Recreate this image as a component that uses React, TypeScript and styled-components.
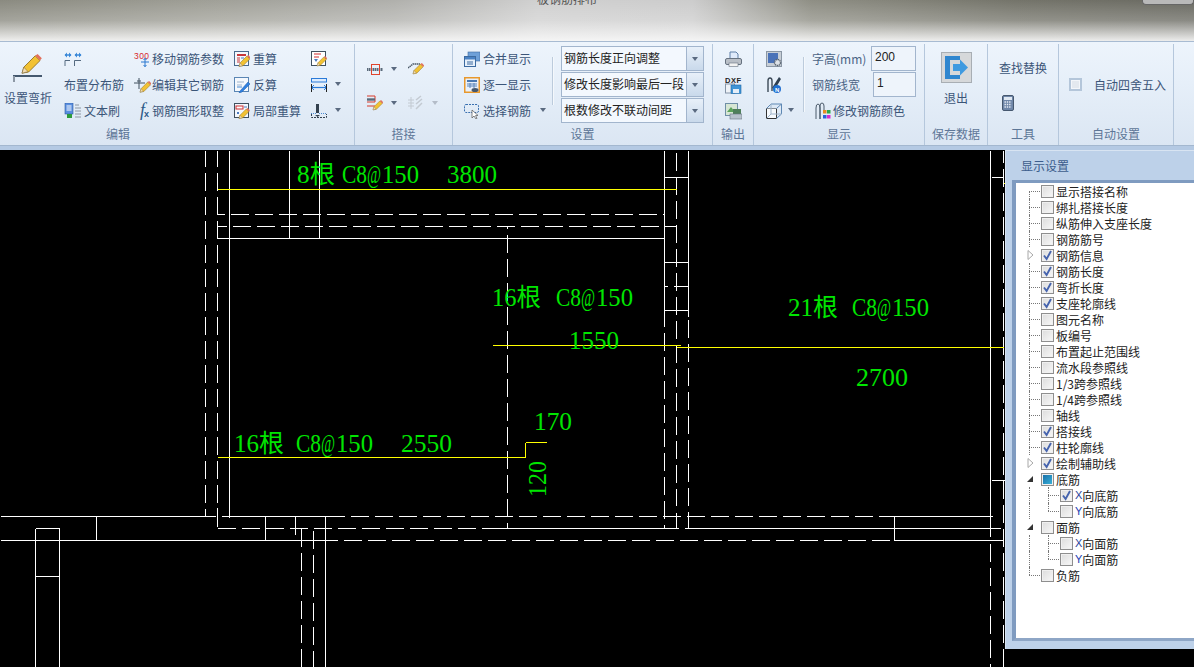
import React from "react";
import styled, { createGlobalStyle, css } from "styled-components";

const Global = createGlobalStyle`
  html, body { margin: 0; padding: 0; background: #000; overflow: hidden; }
  #root { width: 1194px; height: 667px; }
`;

const Page = styled.div`
  width: 1194px;
  height: 667px;
  display: flex;
  flex-direction: column;
  overflow: hidden;
  font-family: "Noto Sans CJK SC", "Liberation Sans", sans-serif;
  font-size: 12px;
`;

const TitleBar = styled.div`
  height: 41px;
  flex: none;
  display: flex;
  justify-content: space-between;
  align-items: flex-start;
  overflow: hidden;
  padding-left: 537px;
  box-sizing: border-box;
  background:
    linear-gradient(180deg, rgba(255,255,255,0) 0%, rgba(255,255,255,0.22) 50%, rgba(248,248,248,0.92) 100%),
    linear-gradient(90deg, #8a8a80 0%, #a2a29a 20%, #b0b0ac 33%, #d0d0d0 45%, #cccccc 58%, #8e8e84 68%, #74746a 85%, #6a6a62 100%);
`;

const TitleText = styled.span`
  color: #555;
  line-height: 12px;
  margin-top: -7px;
`;

const WindowButtons = styled.div`
  width: 50px;
  height: 4px;
  border: 1px solid #666;
  border-top: none;
  border-radius: 0 0 4px 4px;
  background: #b9b9b9;
`;

const Ribbon = styled.div`
  height: 105px;
  flex: none;
  display: flex;
  box-sizing: border-box;
  border-top: 1px solid #a8bbd2;
  border-bottom: 1px solid #a3b7cf;
  color: #3b5578;
  background: linear-gradient(180deg, #edf4fc 0%, #e6eff9 40%, #dbe6f3 100%);
`;

const Group = styled.div<{ $w?: number }>`
  flex: ${(p) => (p.$w ? `0 0 ${p.$w}px` : "1 1 0")};
  box-sizing: border-box;
  display: flex;
  flex-direction: column;
  margin-top: 2px;
  border-right: 1px solid #b5c7dc;
  &:last-child { border-right: none; }
`;

const GroupBody = styled.div<{ $pl?: number; $center?: boolean }>`
  height: 78px;
  margin-top: 1px;
  padding-left: ${(p) => p.$pl ?? 0}px;
  display: flex;
  align-items: flex-start;
  justify-content: ${(p) => (p.$center ? "center" : "flex-start")};
`;

const GroupLabel = styled.div<{ $w?: number }>`
  height: 21px;
  line-height: 21px;
  text-align: center;
  color: #5d7697;
  ${(p) => p.$w && css`width: ${p.$w}px;`}
`;

const LargeButton = styled.div<{ $mr?: number; $pt: number; $gap: number }>`
  width: 48px;
  height: 78px;
  margin-right: ${(p) => p.$mr ?? 0}px;
  display: flex;
  flex-direction: column;
  align-items: center;
  padding-top: ${(p) => p.$pt}px;
  box-sizing: border-box;
  gap: ${(p) => p.$gap}px;
  white-space: nowrap;
`;

const Column = styled.div<{ $w?: number }>`
  ${(p) => p.$w && css`width: ${p.$w}px;`}
  flex: none;
  display: flex;
  flex-direction: column;
`;

const Row = styled.div<{ $gap?: number; $pl?: number }>`
  height: 26px;
  display: flex;
  align-items: center;
  gap: ${(p) => p.$gap ?? 2}px;
  padding-left: ${(p) => p.$pl ?? 0}px;
  white-space: nowrap;
  & > svg { margin-top: 2px; }
`;

const Caret = styled.span<{ $ml?: number; $off?: boolean }>`
  width: 0;
  height: 0;
  flex: none;
  margin-left: ${(p) => p.$ml ?? 0}px;
  border-left: 3.5px solid transparent;
  border-right: 3.5px solid transparent;
  border-top: 4px solid ${(p) => (p.$off ? "#b4bcc8" : "#5a6a80")};
`;

const VSep = styled.div<{ $mt: number; $h: number; $mr: number }>`
  width: 1px;
  flex: none;
  height: ${(p) => p.$h}px;
  margin-top: ${(p) => p.$mt}px;
  margin-right: ${(p) => p.$mr}px;
  background: #bccbdc;
  box-shadow: 1px 0 0 #f4f8fc;
`;

const LapGrid = styled.div`
  display: grid;
  grid-template-columns: 41px 30px;
  grid-auto-rows: 34px;
  margin-top: 7px;
  align-items: center;
`;

const LapCell = styled.div`
  display: flex;
  align-items: center;
  gap: 8px;
`;

const Combos = styled.div`
  width: 143px;
  margin-top: 1px;
  display: flex;
  flex-direction: column;
  gap: 1px;
`;

const Combo = styled.div`
  height: 25px;
  box-sizing: border-box;
  display: flex;
  border: 1px solid #a2b5cd;
  background: #f3f8fe;
  color: #222;
`;

const ComboText = styled.span`
  flex: 1;
  padding-left: 2px;
  line-height: 22px;
  white-space: nowrap;
  overflow: hidden;
`;

const ComboButton = styled.span`
  width: 16px;
  flex: none;
  display: flex;
  align-items: center;
  justify-content: center;
  border-left: 1px solid #a2b5cd;
  background: linear-gradient(180deg, #e8f0f9, #c9d9eb);
`;

const FieldRow = styled.div<{ $label: number }>`
  display: flex;
  height: 26px;
  align-items: center;
  white-space: nowrap;
  & > span { width: ${(p) => p.$label}px; flex: none; color: #4b6485; }
`;

const NumberInput = styled.div<{ $w: number }>`
  width: ${(p) => p.$w}px;
  height: 25px;
  align-self: flex-end;
  box-sizing: border-box;
  border: 1px solid #a2b5cd;
  background: #eef4fb;
  color: #222;
  font-family: "Liberation Sans", sans-serif;
  padding-left: 3px;
  line-height: 21px;
`;

const ToolsColumn = styled.div`
  display: flex;
  flex-direction: column;
  white-space: nowrap;
  padding-top: 14px;
  gap: 19px;
  align-items: flex-start;
`;

const CalcWrap = styled.div`
  padding-left: 3px;
`;

const AutoRow = styled.div`
  height: 78px;
  display: flex;
  align-items: center;
  gap: 12px;
  white-space: nowrap;
`;

const AutoBox = styled.span`
  width: 13px;
  height: 13px;
  margin-top: 1px;
  box-sizing: border-box;
  border: 2px solid #b4c6da;
  background: #e4e9ef;
  box-shadow: inset 0 0 0 1px #f3f6fa;
`;

const Stripe = styled.div`
  height: 4px;
  flex: none;
  background: #b4c9e3;
`;

const Workspace = styled.div`
  position: relative;
  flex: 1;
  background: #000;
`;

const Drawing = styled.svg`
  display: block;
  width: 1194px;
  height: 517px;
`;

const Panel = styled.div`
  position: absolute;
  top: 0;
  right: 0;
  width: 189px;
  height: 499px;
  box-sizing: border-box;
  padding-left: 6px;
  background: #bdd1e9;
  border-top: 1px solid #d8e4f2;
  border-left: 1px solid #d5e2f1;
  display: flex;
  flex-direction: column;
`;

const PanelTitle = styled.div`
  height: 29px;
  line-height: 29px;
  padding-left: 9px;
  color: #3c5d8c;
  flex: none;
`;

const TreeBox = styled.div`
  height: 461px;
  box-sizing: border-box;
  border-left: 4px solid #7f9bc0;
  border-top: 3px solid #7f9bc0;
  border-bottom: 3px solid #8ea6c6;
  background: #fff;
`;

const TreeRow = styled.div`
  height: 16px;
  display: flex;
  align-items: center;
  color: #222;
  white-space: nowrap;
`;

type GuideMode = "first" | "mid" | "last" | "pass" | "marker";

const Guide = styled.span<{ $mode: GuideMode; $w: number; $at: number }>`
  position: relative;
  height: 16px;
  width: ${(p) => p.$w}px;
  flex: none;
  ${(p) => p.$mode !== "marker" && css`
    &::before {
      content: "";
      position: absolute;
      left: ${p.$at}px;
      top: ${p.$mode === "first" ? 8 : 0}px;
      bottom: ${p.$mode === "last" ? 8 : 0}px;
      border-left: 1px dotted #777;
    }
  `}
  ${(p) => p.$mode !== "pass" && p.$mode !== "marker" && css`
    &::after {
      content: "";
      position: absolute;
      left: ${p.$at}px;
      top: 8px;
      width: ${p.$w - p.$at - 1}px;
      border-top: 1px dotted #777;
    }
  `}
`;

const Marker = styled.svg`
  position: absolute;
  left: 10px;
  top: 3px;
`;

const Check = styled.span<{ $state: number }>`
  width: 13px;
  height: 13px;
  flex: none;
  box-sizing: border-box;
  border: 1px solid #8e8e8e;
  margin-right: 2px;
  display: flex;
  align-items: center;
  justify-content: center;
  background: linear-gradient(135deg, #dcdcdc, #f8f8f8);
  box-shadow: inset 0 0 0 1px #f0f0f0;
  ${(p) => p.$state === 2 && css`
    &::after {
      content: "";
      width: 9px;
      height: 9px;
      background: linear-gradient(135deg, #1a6fa8, #37b0d8);
    }
  `}
`;

const AxisMark = styled.span<{ $c: string }>`
  color: ${(p) => p.$c};
  font-family: "Liberation Sans", sans-serif;
  font-size: 11px;
`;

const Ic = styled.svg`
  display: block;
  flex: none;
`;

const Pencil = ({ x, y, s = 1 }: { x: number; y: number; s?: number }) => (
  <g transform={`translate(${x} ${y}) scale(${s})`}>
    <path d="M0 16 L1.5 11 L11 1.5 L15 5.5 L5.5 15 Z" fill="#f2c233" stroke="#8a6a1c" strokeWidth=".7" />
    <path d="M0 16 L1.5 11 L5 14.7 Z" fill="#f3dcb0" stroke="#6a5a3a" strokeWidth=".4" />
    <path d="M11 1.5 L13 0 L16.5 3.5 L15 5.5 Z" fill="#e2705c" />
  </g>
);

const Frame = ({ c = "#4a6a8e" }: { c?: string }) => (
  <rect x=".5" y=".5" width="14" height="14" fill="#f4f8fd" stroke={c} />
);

const IconBend = () => (
  <Ic width="30" height="28" viewBox="0 0 30 28">
    <Pencil x={9} y={0} s={1.2} />
    <path d="M0 22 H29" stroke="#44586e" strokeWidth="2" />
    <path d="M1 22 V28" stroke="#8d98a5" strokeWidth="2" />
  </Ic>
);
const IconSpread = () => (
  <Ic width="18" height="14" viewBox="0 0 18 14">
    <path d="M1 3 H7 M11 3 H17" stroke="#3a88d8" strokeWidth="1.4" />
    <path d="M3 0.5 L0.5 3 L3 5.5 Z M5 0.5 L7.5 3 L5 5.5 Z M13 0.5 L10.5 3 L13 5.5 Z M15 0.5 L17.5 3 L15 5.5 Z" fill="#3a88d8" />
    <path d="M1 14 V8.5 H6 M10.5 14 V8.5 H17" fill="none" stroke="#556a80" />
  </Ic>
);
const IconBrush = () => (
  <Ic width="18" height="16" viewBox="0 0 18 16">
    <rect x="1" y="0" width="8" height="11" fill="#5a8fe0" stroke="#2c5aa0" strokeWidth=".6" />
    <path d="M2.5 3 H7.5 M2.5 5 H7.5 M2.5 7 H7.5" stroke="#fff" />
    <rect x="3" y="11" width="5" height="4" fill="#2c9a3c" />
    <path d="M11 5 H17 M11 8 H17 M11 11 H17 M11 14 H17 M11 2 H15" stroke="#8c96a2" />
  </Ic>
);
const IconMove = () => (
  <Ic width="17" height="16" viewBox="0 0 17 16">
    <text x="0" y="8" fontFamily="Liberation Sans" fontSize="8.5" fill="#d8282c" textLength="15">300</text>
    <path d="M11 7 V16 M7 11 H15" stroke="#2a78d0" />
    <path d="M9.5 9 L11 7.5 L12.5 9 M9.5 14 L11 15.5 L12.5 14" fill="none" stroke="#2a78d0" />
  </Ic>
);
const IconEdit = () => (
  <Ic width="17" height="16" viewBox="0 0 17 16">
    <path d="M0 6 H11 M5 1 V12" stroke="#40505f" fill="none" />
    <path d="M3 4 H7" stroke="#40505f" />
    <Pencil x={6} y={4} s={0.7} />
  </Ic>
);
const IconFx = () => (
  <Ic width="16" height="24" viewBox="0 0 16 24">
    <text x="4" y="17" fontFamily="Liberation Serif" fontStyle="italic" fontSize="18" fill="#2d5a88">f</text>
    <text x="8" y="18" fontFamily="Liberation Sans" fontWeight="700" fontSize="9" fill="#2d5a88">x</text>
  </Ic>
);
const IconRecalc = () => (
  <Ic width="16" height="16" viewBox="0 0 16 16">
    <Frame />
    <rect x="3" y="3" width="9" height="2" fill="#c8363a" />
    <path d="M3 7 H6 M3 9 H6 M3 11 H6" stroke="#c8363a" />
    <path d="M7 7 H10" stroke="#4a7ac0" />
    <Pencil x={5} y={4} s={0.72} />
  </Ic>
);
const IconReverse = () => (
  <Ic width="16" height="16" viewBox="0 0 16 16">
    <Frame c="#5a86b4" />
    <path d="M3 5 H10 M3 8 H8" stroke="#9db4cc" />
    <path d="M3 10 H8" stroke="#4a8ad0" />
    <path d="M6 14 L14 5 L16 7 L8 15 L5 16 Z" fill="#2f80e0" stroke="#1d5aa8" strokeWidth=".5" />
  </Ic>
);
const IconLocal = () => (
  <Ic width="16" height="16" viewBox="0 0 16 16">
    <Frame c="#40505f" />
    <rect x="2" y="3" width="7" height="3" fill="#fff" stroke="#d02c30" />
    <path d="M10 4 H13" stroke="#4a7ac0" />
    <path d="M3 9 L5 11 M5 9 L3 11" stroke="#4a7ac0" />
    <Pencil x={5} y={5} s={0.66} />
  </Ic>
);
const IconRuleEdit = () => (
  <Ic width="16" height="16" viewBox="0 0 16 16">
    <rect x=".5" y=".5" width="14" height="14" fill="#fff" stroke="#40505f" />
    <path d="M3 3 H10 M3 6 H8" stroke="#d02c30" />
    <path d="M3 8 H7 L5 11 Z" fill="#4a7ac0" />
    <Pencil x={6} y={5} s={0.62} />
  </Ic>
);
const IconRuler = () => (
  <Ic width="16" height="15" viewBox="0 0 16 15">
    <rect x=".5" y=".5" width="15" height="3.5" fill="#dcecff" stroke="#2a7ad8" />
    <path d="M0 9.5 H16" stroke="#2a7ad8" strokeWidth="1.2" />
    <path d="M3 7 L0.5 9.5 L3 12 M13 7 L15.5 9.5 L13 12" fill="none" stroke="#2a7ad8" />
    <path d="M.5 6 V14 M15.5 6 V14" stroke="#222" />
  </Ic>
);
const IconDrop = () => (
  <Ic width="16" height="14" viewBox="0 0 16 14">
    <rect x="5" y="0" width="3" height="9" fill="#33414f" />
    <path d="M0 9.5 H5 M8 9.5 H16" stroke="#4a8ad0" strokeDasharray="1 1" />
    <path d="M.5 10 V13.5 H15.5 V10" fill="none" stroke="#33414f" strokeDasharray="2 1" />
    <path d="M4 11 H9 L6.5 13 Z" fill="#33414f" />
  </Ic>
);
const IconLap = () => (
  <Ic width="16" height="11" viewBox="0 0 16 11">
    <path d="M0 5.5 H16" stroke="#5a6a7a" strokeWidth="3" strokeDasharray="1.5 .5" />
    <rect x="4.5" y=".5" width="8" height="10" fill="none" stroke="#e0442c" />
  </Ic>
);
const IconLapPencil = () => (
  <Ic width="16" height="16" viewBox="0 0 16 16">
    <path d="M0 1 H8 V7 H0 M0 11 H8" fill="none" stroke="#d83a2a" />
    <path d="M0 4.5 H8" stroke="#5a6a7a" strokeWidth="2.4" />
    <Pencil x={6} y={5} s={0.62} />
  </Ic>
);
const IconHatchPencil = () => (
  <Ic width="16" height="12" viewBox="0 0 16 12">
    <path d="M0 5 L5 1 H12" fill="none" stroke="#4c5a68" strokeWidth="1.5" strokeDasharray="1.5 .5" />
    <Pencil x={5} y={0} s={0.68} />
  </Ic>
);
const IconGhost = () => (
  <Ic width="16" height="16" viewBox="0 0 16 16">
    <path d="M0 5 H6 M0 8 H6 M0 11 H6 M3 2 V14" stroke="#c3cad2" />
    <path d="M8 5 L13 1 M8 9 L14 4 M8 14 L14 8" stroke="#c3cad2" strokeWidth="1.5" />
  </Ic>
);
const IconMerge = () => (
  <Ic width="16" height="16" viewBox="0 0 16 16">
    <rect x="4" y="1" width="12" height="9" fill="#6ea0d8" stroke="#3c6aa0" strokeWidth=".6" />
    <rect x=".5" y="5.5" width="11" height="10" fill="#e8f1fb" stroke="#3c6aa0" />
    <rect x="1" y="6" width="10" height="2.5" fill="#4a82c4" />
    <path d="M3 11 H9 M3 13 H9" stroke="#3c6aa0" />
  </Ic>
);
const IconOneByOne = () => (
  <Ic width="16" height="16" viewBox="0 0 16 16">
    <rect x=".75" y=".75" width="14.5" height="14.5" fill="#e8f0fa" stroke="#e8982c" strokeWidth="1.5" />
    <rect x="3" y="3" width="10" height="2" fill="#4a78b0" />
    <path d="M3 7 H13 M3 9 H13 M6 6 V11 M10 6 V11" stroke="#5c86ba" />
    <ellipse cx="11" cy="13" rx="3.5" ry="2" fill="#46586c" />
  </Ic>
);
const IconSelect = () => (
  <Ic width="16" height="16" viewBox="0 0 16 16">
    <rect x=".5" y="1.5" width="14" height="8" rx="1.5" fill="none" stroke="#3a70b0" strokeDasharray="2 1" />
    <path d="M8 7 V15 L10 13 L12 16 L13 15.4 L11.5 12.6 L14 12.4 Z" fill="#fff" stroke="#555" strokeWidth=".7" />
  </Ic>
);
const IconPrint = () => (
  <Ic width="17" height="16" viewBox="0 0 17 16">
    <path d="M5 1 H11 L13 3 V8 H5 Z" fill="#dfeafa" stroke="#5e7ea6" />
    <rect x=".5" y="7.5" width="16" height="6" rx="1.5" fill="#b9bfc7" stroke="#677280" />
    <rect x="4" y="12" width="9" height="3.5" fill="#f2f2f2" stroke="#677280" strokeWidth=".6" />
  </Ic>
);
const IconDxf = () => (
  <Ic width="17" height="18" viewBox="0 0 17 18">
    <text x="0" y="7" fontFamily="Liberation Sans" fontWeight="700" fontSize="7.5" fill="#222" textLength="16">DXF</text>
    <rect x=".5" y="8" width="9" height="9" fill="#eef2f7" stroke="#8594a6" />
    <rect x="6" y="9" width="10" height="8.5" fill="#3f95d6" stroke="#1e6aa8" strokeWidth=".6" />
    <rect x="8" y="13" width="6" height="4" fill="#e4edf7" />
  </Ic>
);
const IconExport = () => (
  <Ic width="17" height="17" viewBox="0 0 17 17">
    <rect x=".5" y=".5" width="12" height="12" fill="#d6e6d4" stroke="#6f8fa6" />
    <path d="M2 9 L6 4 L10 9 Z" fill="#5aa25a" />
    <rect x="8" y="6" width="8" height="5" fill="#4f7f5a" />
    <rect x="5" y="11" width="12" height="5" fill="#b8c2cc" stroke="#6a7684" strokeWidth=".6" />
  </Ic>
);
const IconGear = () => (
  <Ic width="16" height="16" viewBox="0 0 16 16">
    <rect x=".5" y=".5" width="15" height="15" fill="#c7ced6" stroke="#8a96a4" />
    <rect x="2" y="2" width="10" height="10" fill="#4a72b8" />
    <circle cx="11.5" cy="11.5" r="3" fill="#dde2e8" stroke="#5c6672" strokeWidth="1.4" strokeDasharray="1.4 .6" />
  </Ic>
);
const IconSteelN = () => (
  <Ic width="16" height="18" viewBox="0 0 16 18">
    <path d="M2 16 V5 Q2 2 4 2 Q6 2 6 5 V15" fill="none" stroke="#3c4a58" strokeWidth="1.4" />
    <path d="M6 12 L13 1 L15 3 L9 13 Z" fill="#2e3f50" />
    <circle cx="11" cy="13" r="4" fill="#1f6fd0" />
    <text x="9" y="15.5" fontFamily="Liberation Sans" fontWeight="700" fontSize="6" fill="#fff">N</text>
  </Ic>
);
const IconCube = () => (
  <Ic width="16" height="16" viewBox="0 0 16 16">
    <path d="M.5 5.5 H10.5 V15.5 H.5 Z" fill="#f7fafd" stroke="#333" />
    <path d="M.5 5.5 L5 1 H15.5 L10.5 5.5 M15.5 1 V11 L10.5 15.5" fill="#dce8f5" stroke="#5e88b4" />
    <path d="M5 1 V11 H15.5 M5 11 L.5 15.5" fill="none" stroke="#9fb4ca" />
  </Ic>
);
const IconColor = () => (
  <Ic width="16" height="18" viewBox="0 0 16 18">
    <path d="M1 17 V6 Q1 2 3 2 Q5 2 5 6 V17 M5 17 V4 Q5 1 7 1 Q9 1 9 4 V10" fill="none" stroke="#4b5a6a" />
    <rect x="8" y="8" width="3.5" height="3.5" fill="#e88c20" />
    <rect x="12" y="8" width="3.5" height="3.5" fill="#2aa84a" />
    <rect x="8" y="13" width="3.5" height="3.5" fill="#2a60d8" />
    <rect x="12" y="13" width="3.5" height="3.5" fill="#d82ad0" />
  </Ic>
);
const IconExit = () => (
  <Ic width="31" height="31" viewBox="0 0 31 31">
    <rect x=".5" y=".5" width="30" height="30" fill="#d6d8da" stroke="#a8aeb4" />
    <path d="M4 4 H19 V8 H9 V23 H19 V27 H4 Z" fill="#2f86cf" />
    <path d="M12 12 H19 V7.5 L27 15.5 L19 23.5 V19 H12 Z" fill="#3f9ae0" />
  </Ic>
);
const IconCalc = () => (
  <Ic width="12" height="16" viewBox="0 0 12 16">
    <rect x=".5" y=".5" width="11" height="15" rx="1.5" fill="#6f86a8" stroke="#46586f" />
    <rect x="2" y="2" width="8" height="3" fill="#dfe8f2" />
    <path d="M2.5 7 H9.5 M2.5 9.5 H9.5 M2.5 12 H9.5" stroke="#e8eef6" strokeWidth="1.4" strokeDasharray="1.4 .9" />
  </Ic>
);

const CheckMark = () => (
  <svg width="11" height="11" viewBox="0 0 11 11">
    <path d="M2 5.5 L4.6 9 L9 1" fill="none" stroke="#4664ae" strokeWidth="1.9" />
  </svg>
);

type Seg = [number, number, number, number];
type DashSeg = [number, number, number, number, number];

const solid: Seg[] = [
  [229, 150, 229, 517], [289, 150, 289, 238], [319, 150, 319, 238],
  [217, 238, 664, 238], [664, 150, 664, 326], [688, 150, 688, 316],
  [664, 177, 688, 177], [664, 262, 688, 262], [664, 310, 688, 310],
  [0, 516, 215, 516], [221, 516, 344, 516], [0, 540, 337, 540],
  [96, 516, 96, 540], [265, 516, 265, 540], [295, 516, 295, 534],
  [325, 516, 325, 667], [35, 528, 35, 667], [59, 528, 59, 667],
  [35, 528, 59, 528], [35, 576, 59, 576],
  [491, 528, 678, 528], [684, 528, 1000, 528],
  [878, 516, 992, 516], [894, 516, 894, 540], [894, 540, 1003, 540],
  [990, 150, 990, 536], [991, 177, 1003, 177], [991, 480, 1005, 480],
  [664, 286, 667, 286], [673, 286, 688, 286],
  [507, 226, 507, 228],
];

const dashed: DashSeg[] = [
  [205, 150, 205, 516, 2], [217, 150, 217, 528, 2], [217, 214, 664, 214, 11], [217, 226, 676, 226, 9],
  [507, 234, 507, 528, 0], [664, 332, 664, 528, 0], [676, 150, 676, 528, 22], [688, 319, 688, 528, 0],
  [350, 516, 878, 516, 0], [217, 528, 491, 528, 0], [343, 540, 889, 540, 0],
  [301, 528, 301, 667, 0], [313, 530, 313, 667, 0], [990, 543, 990, 667, 0], [1003, 150, 1003, 667, 6],
];

const yellow: Seg[] = [
  [217, 189, 676, 189], [492, 345, 680, 345], [676, 347, 1003, 347],
  [217, 457, 525, 457], [525, 442, 525, 457], [525, 442, 546, 442], [1003, 183, 1005, 183],
];

const Dim = ({ x, y, len, children }: { x: number; y: number; len: number; children: string }) => (
  <text x={x} y={y} textLength={len} lengthAdjust="spacingAndGlyphs" fontSize="25"
    fontFamily={'"Liberation Serif","Noto Sans CJK SC",serif'} fill="#00e600">{children}</text>
);

const RebarSpec = ({ x, y }: { x: number; y: number }) => (
  <>
    <Dim x={x} y={y} len={25}>C8</Dim>
    <Dim x={x + 25} y={y} len={14}>@</Dim>
    <Dim x={x + 40} y={y} len={37}>150</Dim>
  </>
);

const CadDrawing = () => (
  <Drawing viewBox="0 150 1194 517">
    <g shapeRendering="crispEdges" strokeWidth="1" fill="none">
      {solid.map(([a, b, c, d], i) => (
        <line key={i} x1={a + 0.5} y1={b + 0.5} x2={c + 0.5} y2={d + 0.5} stroke="#fff" />
      ))}
      {dashed.map(([a, b, c, d, o], i) => (
        <line key={i} x1={a + 0.5} y1={b + 0.5} x2={c + 0.5} y2={d + 0.5} stroke="#fff" strokeDasharray="18 6" strokeDashoffset={o} />
      ))}
      {yellow.map(([a, b, c, d], i) => (
        <line key={i} x1={a + 0.5} y1={b + 0.5} x2={c + 0.5} y2={d + 0.5} stroke="#ffff00" />
      ))}
    </g>
    <Dim x={297} y={183} len={38}>8根</Dim>
    <RebarSpec x={342} y={183} />
    <Dim x={447} y={183} len={50}>3800</Dim>
    <Dim x={492} y={306} len={49}>16根</Dim>
    <RebarSpec x={556} y={306} />
    <Dim x={569} y={349} len={50}>1550</Dim>
    <Dim x={788} y={316} len={50}>21根</Dim>
    <RebarSpec x={852} y={316} />
    <Dim x={856} y={386} len={52}>2700</Dim>
    <Dim x={234} y={452} len={50}>16根</Dim>
    <RebarSpec x={296} y={452} />
    <Dim x={401} y={452} len={51}>2550</Dim>
    <Dim x={534} y={430} len={38}>170</Dim>
    <g transform="translate(546 497) rotate(-90)">
      <Dim x={0} y={0} len={36}>120</Dim>
    </g>
  </Drawing>
);

type Node = {
  text: string;
  state?: 0 | 1 | 2;
  mode?: GuideMode;
  marker?: "closed" | "open";
  child?: "mid" | "last";
  axis?: { l: string; c: string };
};

const nodes: Node[] = [
  { text: "显示搭接名称", mode: "first" },
  { text: "绑扎搭接长度" },
  { text: "纵筋伸入支座长度" },
  { text: "钢筋筋号" },
  { text: "钢筋信息", state: 1, marker: "closed" },
  { text: "钢筋长度", state: 1 },
  { text: "弯折长度", state: 1 },
  { text: "支座轮廓线", state: 1 },
  { text: "图元名称" },
  { text: "板编号" },
  { text: "布置起止范围线" },
  { text: "流水段参照线" },
  { text: "1/3跨参照线" },
  { text: "1/4跨参照线" },
  { text: "轴线" },
  { text: "搭接线", state: 1 },
  { text: "柱轮廓线", state: 1 },
  { text: "绘制辅助线", state: 1, marker: "closed" },
  { text: "底筋", state: 2, marker: "open" },
  { text: "向底筋", state: 1, child: "mid", axis: { l: "X", c: "#2a3f9c" } },
  { text: "向底筋", child: "last", axis: { l: "Y", c: "#1c3cb0" } },
  { text: "面筋", marker: "open" },
  { text: "向面筋", child: "mid", axis: { l: "X", c: "#2a3f9c" } },
  { text: "向面筋", child: "last", axis: { l: "Y", c: "#1c3cb0" } },
  { text: "负筋", mode: "last" },
];

const TreeItem = ({ n }: { n: Node }) => (
  <TreeRow>
    <Guide $mode={n.child ? "pass" : n.marker ? "marker" : n.mode ?? "mid"} $w={25} $at={13}>
      {n.marker === "closed" && (
        <Marker width="8" height="10" viewBox="0 0 8 10">
          <path d="M2 .5 L7 5 L2 9.5 Z" fill="#fff" stroke="#a8a8a8" />
        </Marker>
      )}
      {n.marker === "open" && (
        <Marker width="8" height="10" viewBox="0 0 8 10">
          <path d="M1 8 L7 2 V8 Z" fill="#333" />
        </Marker>
      )}
    </Guide>
    {n.child && <Guide $mode={n.child} $w={19} $at={7} />}
    <Check $state={n.state ?? 0}>{n.state === 1 && <CheckMark />}</Check>
    {n.axis && <AxisMark $c={n.axis.c}>{n.axis.l}</AxisMark>}
    {n.text}
  </TreeRow>
);

const ComboBox = ({ text }: { text: string }) => (
  <Combo>
    <ComboText>{text}</ComboText>
    <ComboButton><Caret /></ComboButton>
  </Combo>
);

export default function App() {
  return (
    <Page>
      <Global />
      <TitleBar>
        <TitleText>板钢筋排布</TitleText>
        <WindowButtons />
      </TitleBar>
      <Ribbon>
        <Group $w={355}>
          <GroupBody $pl={4}>
            <LargeButton $mr={12} $pt={9} $gap={7}>
              <IconBend />
              <span>设置弯折</span>
            </LargeButton>
            <Column $w={69}>
              <Row><IconSpread /></Row>
              <Row>布置分布筋</Row>
              <Row><IconBrush />文本刷</Row>
            </Column>
            <Column $w={101}>
              <Row $pl={1} $gap={1}><IconMove />移动钢筋参数</Row>
              <Row $pl={1} $gap={1}><IconEdit />编辑其它钢筋</Row>
              <Row $pl={3} $gap={0}><IconFx />钢筋图形取整</Row>
            </Column>
            <Column $w={77}>
              <Row $gap={3}><IconRecalc />重算</Row>
              <Row $gap={3}><IconReverse />反算</Row>
              <Row $gap={3}><IconLocal />局部重算</Row>
            </Column>
            <Column>
              <Row><IconRuleEdit /></Row>
              <Row $gap={8}><IconRuler /><Caret /></Row>
              <Row $gap={8}><IconDrop /><Caret /></Row>
            </Column>
          </GroupBody>
          <GroupLabel $w={236}>编辑</GroupLabel>
        </Group>
        <Group $w={98}>
          <GroupBody $pl={12}>
            <LapGrid>
              <LapCell><IconLap /><Caret /></LapCell>
              <LapCell><IconHatchPencil /></LapCell>
              <LapCell><IconLapPencil /><Caret /></LapCell>
              <LapCell><IconGhost /><Caret $off /></LapCell>
            </LapGrid>
          </GroupBody>
          <GroupLabel>搭接</GroupLabel>
        </Group>
        <Group $w={260}>
          <GroupBody $pl={11}>
            <Column $w={88}>
              <Row $gap={3}><IconMerge />合并显示</Row>
              <Row $gap={3}><IconOneByOne />逐一显示</Row>
              <Row $gap={3}><IconSelect />选择钢筋<Caret $ml={6} /></Row>
            </Column>
            <VSep $mt={12} $h={48} $mr={8} />
            <Combos>
              <ComboBox text="钢筋长度正向调整" />
              <ComboBox text="修改长度影响最后一段" />
              <ComboBox text="根数修改不联动间距" />
            </Combos>
          </GroupBody>
          <GroupLabel>设置</GroupLabel>
        </Group>
        <Group $w={41}>
          <GroupBody $pl={12}>
            <Column>
              <Row><IconPrint /></Row>
              <Row><IconDxf /></Row>
              <Row><IconExport /></Row>
            </Column>
          </GroupBody>
          <GroupLabel>输出</GroupLabel>
        </Group>
        <Group $w={171}>
          <GroupBody $pl={12}>
            <Column $w={37}>
              <Row><IconGear /></Row>
              <Row><IconSteelN /></Row>
              <Row $gap={6}><IconCube /><Caret /></Row>
            </Column>
            <VSep $mt={12} $h={55} $mr={8} />
            <Column>
              <FieldRow $label={59}><span>字高(mm)</span><NumberInput $w={45}>200</NumberInput></FieldRow>
              <FieldRow $label={61}><span>钢筋线宽</span><NumberInput $w={43}>1</NumberInput></FieldRow>
              <Row $pl={3} $gap={2}><IconColor />修改钢筋颜色</Row>
            </Column>
          </GroupBody>
          <GroupLabel>显示</GroupLabel>
        </Group>
        <Group $w={63}>
          <GroupBody $center>
            <LargeButton $pt={7} $gap={6}>
              <IconExit />
              <span>退出</span>
            </LargeButton>
          </GroupBody>
          <GroupLabel>保存数据</GroupLabel>
        </Group>
        <Group $w={71}>
          <GroupBody $pl={11}>
            <ToolsColumn>
              <span>查找替换</span>
              <CalcWrap><IconCalc /></CalcWrap>
            </ToolsColumn>
          </GroupBody>
          <GroupLabel>工具</GroupLabel>
        </Group>
        <Group $w={115}>
          <GroupBody $pl={10}>
            <AutoRow><AutoBox />自动四舍五入</AutoRow>
          </GroupBody>
          <GroupLabel>自动设置</GroupLabel>
        </Group>
        <Group />
      </Ribbon>
      <Stripe />
      <Workspace>
        <CadDrawing />
        <Panel>
          <PanelTitle>显示设置</PanelTitle>
          <TreeBox>
            {nodes.map((n, i) => <TreeItem key={i} n={n} />)}
          </TreeBox>
        </Panel>
      </Workspace>
    </Page>
  );
}
